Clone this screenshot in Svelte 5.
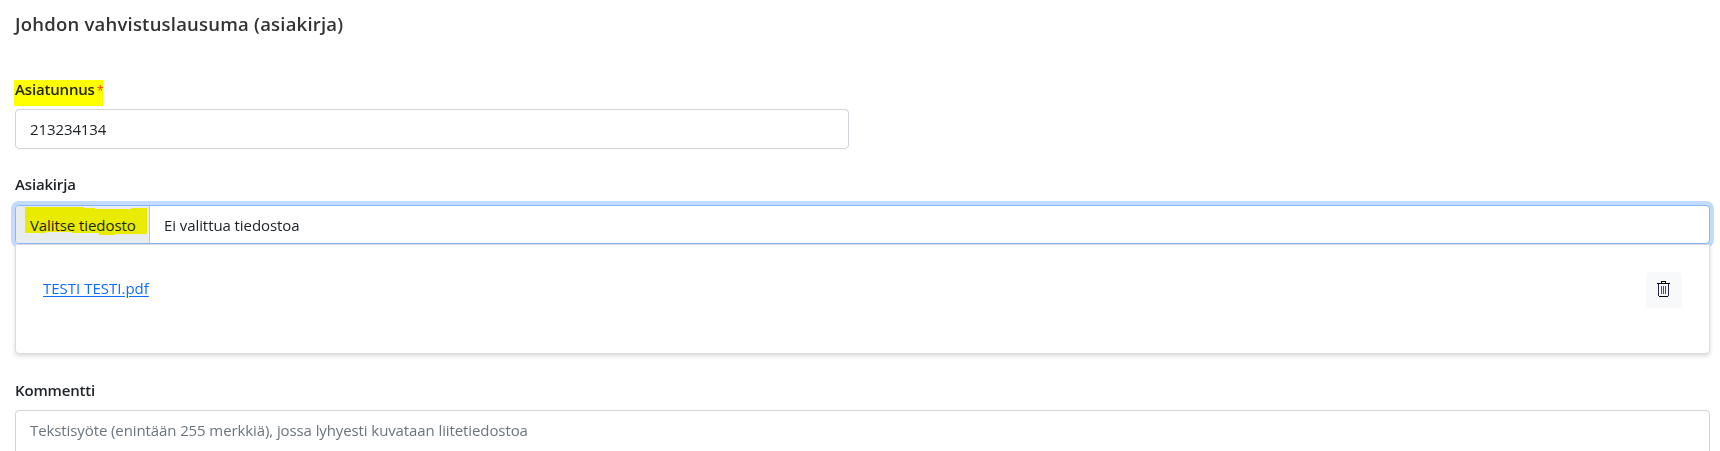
<script lang="ts">
  let caseId = $state('213234134');
  let comment = $state('');
  let files = $state(['TESTI TESTI.pdf']);

  function removeFile(name: string) {
    files = files.filter((f) => f !== name);
  }
</script>

<main class="form">
  <h5 class="title">Johdon vahvistuslausuma (asiakirja)</h5>

  <div class="field">
    <label class="label marked" for="case-id">Asiatunnus<span class="required">*</span></label>
    <input id="case-id" class="control half" type="text" bind:value={caseId} />
  </div>

  <div class="field">
    <span class="label doc">Asiakirja</span>
    <div class="file-input">
      <button class="choose" type="button">
        <span class="choose-text">Valitse tiedosto</span>
      </button>
      <span class="file-status">Ei valittua tiedostoa</span>
    </div>
    <div class="file-list">
      {#each files as name (name)}
        <div class="file-row">
          <a class="file-link" href="#file">{name}</a>
          <button class="remove" type="button" aria-label="Poista" onclick={() => removeFile(name)}>
            <svg width="13" height="16" viewBox="0 0 13 16" fill="none" shape-rendering="crispEdges">
              <path d="M4.5 2V0.5H8.5V2M0 2.5H13" stroke="#000" />
              <path d="M1.5 3V15M11.5 3V15" stroke="#26264f" />
              <path d="M2 15.5H11" stroke="#000" />
              <path d="M4.5 5V13M6.5 5V13M8.5 5V13" stroke="#43438c" />
            </svg>
          </button>
        </div>
      {/each}
    </div>
  </div>

  <div class="field">
    <label class="label comment" for="comment">Kommentti</label>
    <textarea
      id="comment"
      class="control area"
      placeholder="Tekstisyöte (enintään 255 merkkiä), jossa lyhyesti kuvataan liitetiedostoa"
      bind:value={comment}
    ></textarea>
  </div>
</main>

<style>
  :global(body) {
    margin: 0;
    background: #fff;
    overflow: hidden;
  }

  .form {
    box-sizing: border-box;
    height: 451px;
    padding: 9px 10px 0 15px;
    overflow: hidden;
    color: #212529;
    font-family: 'Segoe UI', 'Open Sans', sans-serif;
    font-size: 15px;
    line-height: 24px;
  }

  .title {
    margin: 0 0 47px;
    font-size: 18.5px;
    font-weight: 550;
    line-height: 30px;
    letter-spacing: 0.21px;
    color: #333;
  }

  .field {
    display: flex;
    flex-direction: column;
    align-items: flex-start;
  }

  .label {
    height: 24px;
    font-size: 15px;
    font-weight: 600;
    line-height: 24px;
    letter-spacing: -0.17px;
  }

  /* highlighter stroke over the label */
  .marked {
    position: relative;
    height: 23px;
    line-height: 7px;
  }

  .marked::after {
    content: '';
    position: absolute;
    left: -1px;
    top: -6px;
    width: 89px;
    height: 26px;
    background: #ff0;
    mix-blend-mode: multiply;
  }

  .required {
    margin-left: 2px;
    color: #ff3545;
    font-size: 13px;
    font-weight: 400;
  }

  .control {
    box-sizing: border-box;
    width: 100%;
    padding: 7px 14px;
    border: 1px solid #ced4da;
    border-radius: 4px;
    outline: 0;
    background: #fff;
    color: #212529;
    font: inherit;
    letter-spacing: -0.1px;
  }

  .half {
    width: 834px;
    height: 40px;
  }

  .doc {
    margin: 23px 0 9px;
  }

  .file-input {
    position: relative;
    display: flex;
    box-sizing: border-box;
    width: 100%;
    height: 39px;
    border: 1px solid #86b7fe;
    border-radius: 4px;
    box-shadow: 0 0 0 4px #c2dbfe;
    background: #fff;
    letter-spacing: -0.08px;
  }

  .choose {
    position: relative;
    box-sizing: border-box;
    width: 134px;
    padding: 0 0 0 14px;
    border: 0;
    border-right: 1px solid #a9c8f5;
    border-radius: 3px 0 0 3px;
    background: #e9ecef;
    color: #212529;
    font: inherit;
    letter-spacing: inherit;
    text-align: left;
  }

  .choose::after {
    content: '';
    position: absolute;
    left: 9px;
    top: 1px;
    width: 122px;
    height: 28px;
    background: #ff0;
    mix-blend-mode: multiply;
    clip-path: polygon(0 0, 59px 0, 59px 1px, 70px 1px, 70px 2px, 106px 2px, 106px 1px, 122px 1px, 122px 27px, 90px 27px, 90px 28px, 74px 28px, 74px 26px, 47px 26px, 47px 25px, 21px 25px, 21px 26px, 0 26px);
  }

  .choose-text {
    white-space: nowrap;
  }

  .file-status {
    padding: 7px 14px 0;
  }

  /* sits under the focus ring's bottom edge */
  .file-list {
    position: relative;
    box-sizing: border-box;
    width: 100%;
    height: 110px;
    padding: 27px 27px 0;
    border: 1px solid #dcdcdc;
    border-radius: 0 0 4px 4px;
    box-shadow: 0 2px 4px rgba(0, 0, 0, 0.15);
    background: #fff;
  }

  .file-row {
    display: flex;
    align-items: flex-start;
    justify-content: space-between;
  }

  .file-link {
    margin-top: 4px;
    color: #0d6efd;
    text-decoration: underline;
    text-underline-offset: 2px;
  }

  .remove {
    display: flex;
    align-items: flex-start;
    justify-content: flex-start;
    width: 36px;
    height: 36px;
    padding: 9px 0 0 11px;
    border: 0;
    border-radius: 4px;
    background: #f8f9fa;
  }

  .comment {
    margin: 24px 0 8px;
  }

  .area {
    height: 80px;
    resize: none;
  }

  .area::placeholder {
    color: #6c757d;
    opacity: 1;
  }
</style>
